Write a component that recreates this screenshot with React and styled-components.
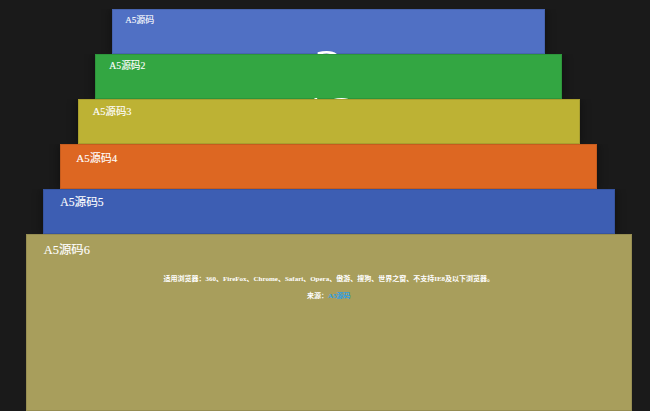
import React from 'react'
import styled, { createGlobalStyle } from 'styled-components'

const GlobalStyle = createGlobalStyle`
  html, body {
    margin: 0;
    height: 100%;
    background: #1a1a1a;
    overflow: hidden;
  }
  body {
    font-family: "Liberation Serif", "Noto Sans CJK SC", serif;
    color: #fff;
  }
`

const Stack = styled.div`
  display: flex;
  flex-direction: column;
  align-items: center;
  width: 606px;
  height: 411px;
  box-sizing: border-box;
  margin-left: 25.8px;
  padding-top: 9px;
  overflow: hidden;
`

const Card = styled.section`
  flex: none;
  box-sizing: border-box;
  width: ${p => p.$width}px;
  height: ${p => p.$height}px;
  padding: ${p => p.$top}px 0 0 ${p => p.$left}px;
  background: ${p => p.$color};
  box-shadow: 0 0 10px rgba(0, 0, 0, 0.45), inset 0 0 0 1px rgba(0, 0, 0, 0.1);
  clip-path: inset(0 -12px);
  overflow: hidden;
`

const Title = styled.h2`
  margin: 0;
  font-size: ${p => p.$size}px;
  font-weight: 400;
  line-height: 14px;
  -webkit-text-stroke: 0.1px #fff;
`

const BigNumber = styled.div`
  margin: ${p => p.$gap}px ${p => p.$left}px 0 0;
  font-size: 60px;
  line-height: 60px;
  text-align: center;
`

const Notice = styled.p`
  margin: 0;
  font-size: 7px;
  line-height: 10px;
  font-weight: 700;
  text-align: center;
`

const Copy = styled.div`
  display: flex;
  flex-direction: column;
  gap: 7px;
  margin: 17px 18px 0 0;
`

const Source = styled.a`
  color: #2a9fe6;
  text-decoration: none;
`

const cards = [
  { name: 'A5源码', color: '#5070c4', width: 433, left: 13, top: 4, size: 9, number: '2', gap: 13 },
  { name: 'A5源码2', color: '#33a642', width: 467, left: 14, top: 5, size: 9.7, number: '12', gap: 14 },
  { name: 'A5源码3', color: '#bdb234', width: 502, left: 15, top: 6, size: 10.4 },
  { name: 'A5源码4', color: '#dd6722', width: 537, left: 16, top: 7, size: 11 },
  { name: 'A5源码5', color: '#3d5eb3', width: 572, left: 17.4, top: 7, size: 11.7 },
]

export default function App() {
  return (
    <>
      <GlobalStyle />
      <Stack>
        {cards.map(card => (
          <Card
            key={card.name}
            $width={card.width}
            $height={45}
            $left={card.left}
            $top={card.top}
            $color={card.color}
          >
            <Title $size={card.size}>{card.name}</Title>
            {card.number && (
              <BigNumber $gap={card.gap} $left={card.left}>{card.number}</BigNumber>
            )}
          </Card>
        ))}
        <Card $width={606} $height={177} $left={18} $top={9} $color="#a89e5c">
          <Title $size={12.4}>A5源码6</Title>
          <Copy>
            <Notice>适用浏览器：360、FireFox、Chrome、Safari、Opera、傲游、搜狗、世界之窗、不支持IE8及以下浏览器。</Notice>
            <Notice>来源：<Source href="#">A5源码</Source></Notice>
          </Copy>
        </Card>
      </Stack>
    </>
  )
}
